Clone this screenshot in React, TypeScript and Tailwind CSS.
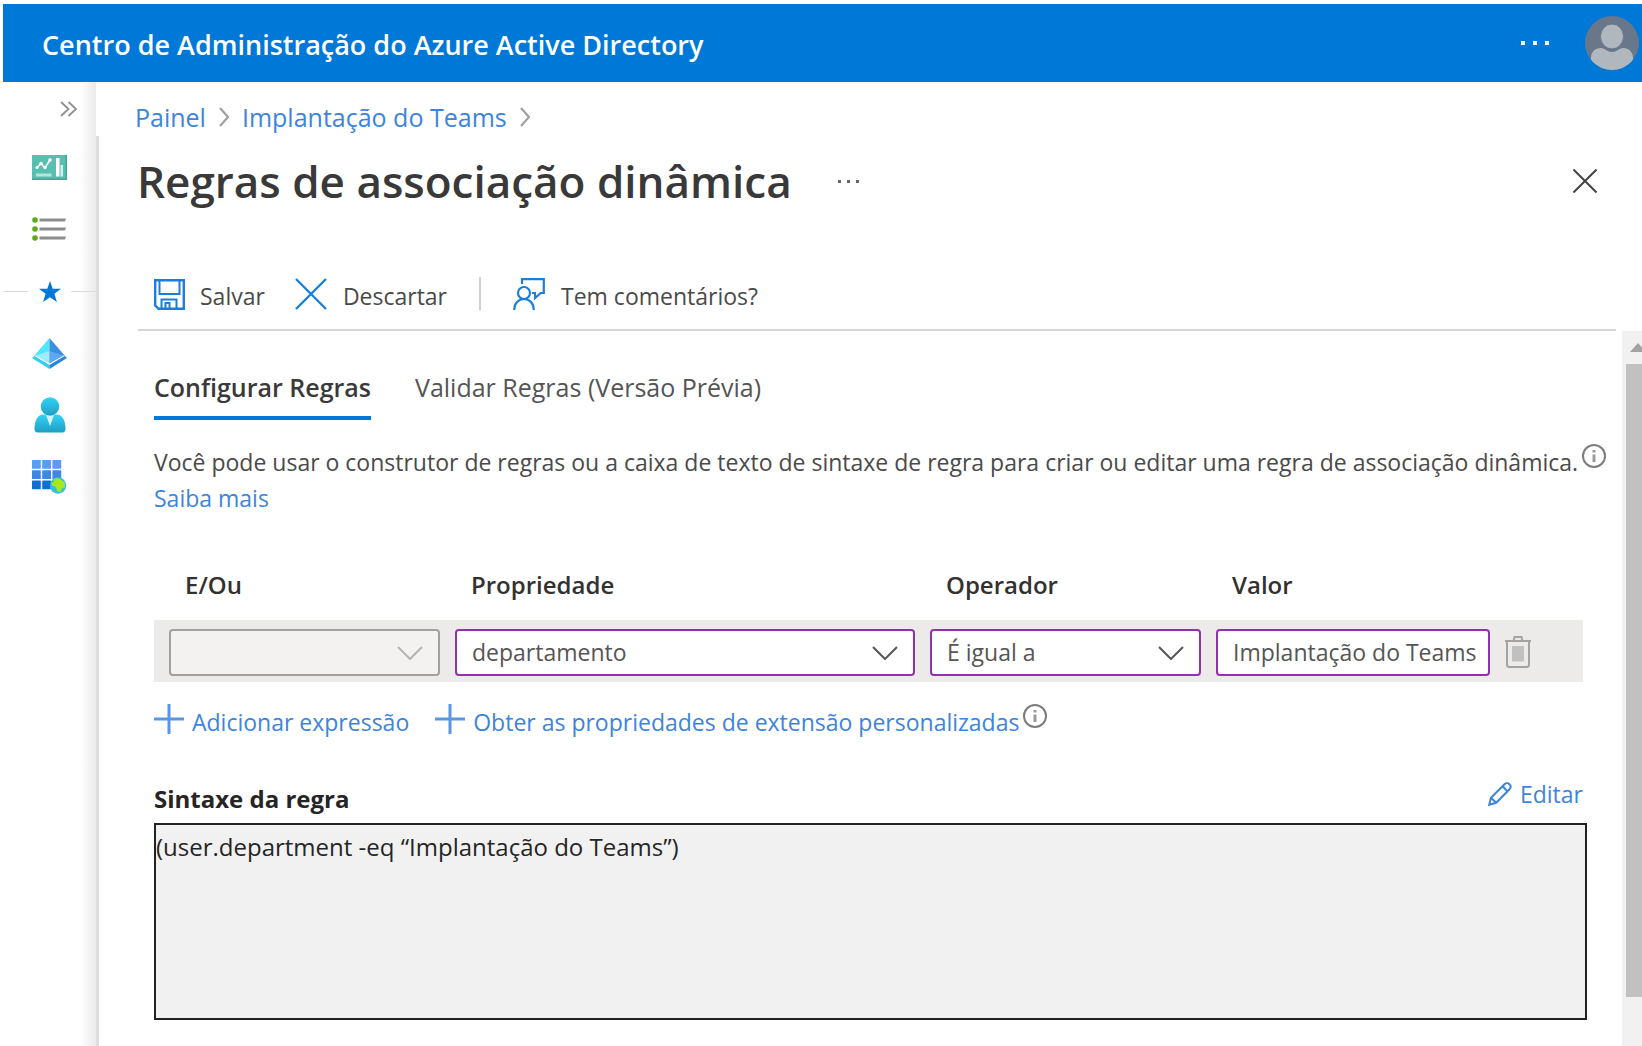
import { useState } from "react";
import type { ReactNode } from "react";

const tabs = ["Configurar Regras", "Validar Regras (Versão Prévia)"];

function Chevron({ className }: { className: string }) {
    return (
        <svg viewBox="0 0 26 14" className={`h-[14px] w-[26px] ${className}`} fill="none" stroke="currentColor" strokeWidth="2">
            <path d="M1 1l12 12L25 1" />
        </svg>
    );
}

function CrumbArrow() {
    return (
        <svg viewBox="0 0 10 20" className="h-5 w-[10px] text-[#a0a0a0]" fill="none" stroke="currentColor" strokeWidth="2.200">
            <path d="M1 1l8 9-8 9" />
        </svg>
    );
}

function PlusIcon() {
    return (
        <svg viewBox="0 0 30 30" className="size-[30px]" fill="none" stroke="#5b96e6" strokeWidth="3">
            <path d="M15 0v30M0 15h30" />
        </svg>
    );
}

function InfoIcon() {
    return (
        <svg viewBox="0 0 24 24" className="size-6 shrink-0" fill="none" stroke="#7c7c7c">
            <circle cx="12" cy="12" r="11" strokeWidth="2" />
            <path d="M12 10.500V18M12 6v2.500" strokeWidth="3" stroke="#9a9a9a" />
        </svg>
    );
}

function DashboardIcon() {
    return (
        <svg viewBox="0 0 35 25" className="h-[25px] w-[35px]">
            <rect width="35" height="25" fill="#56bfb0" />
            <path d="M0 25h35V0h-1.500v23.500H0z" fill="#45a597" />
            <path d="M4.500 13l4.500-4.500 4 4.500 5-8" fill="none" stroke="#fff" strokeWidth="1.600" />
            <circle cx="5" cy="12.500" r="1.500" fill="#fff" />
            <circle cx="9" cy="8.500" r="1.700" fill="#fff" />
            <circle cx="13" cy="12.500" r="1.700" fill="#fff" />
            <circle cx="18" cy="5" r="1.800" fill="#fff" />
            <path d="M4 18.500h15.500v3H4z" fill="#b5e3dc" />
            <path d="M24 3h3.500v18.500H24z" fill="#fff" />
            <path d="M28.500 10H31v11.500h-2.500z" fill="#d5f0ec" />
        </svg>
    );
}

function ListIcon() {
    return (
        <svg viewBox="0 0 35 24" className="h-6 w-[35px]">
            {[3, 12, 21].map((y) => (
                <g key={y}>
                    <circle cx="3" cy={y} r="2.800" fill="#5ea81c" />
                    <path d={`M7.500 ${y - 1.5}H34l-1 3H7.500z`} fill="#8c8c8c" />
                </g>
            ))}
        </svg>
    );
}

function PyramidIcon() {
    return (
        <svg viewBox="0 0 35 31" className="h-[31px] w-[35px]">
            <path d="M17.500 0L1.500 18.500l16 9z" fill="#50e6ff" />
            <path d="M17.500 0l16 18.500-16 9z" fill="#3a8fe0" />
            <path d="M2 18l15.500-5v14z" fill="#9cebff" />
            <path d="M33 18l-15.500-5v14z" fill="#5ea8ef" />
            <path d="M2.500 18l15 8.500 15-8.500" fill="none" stroke="#fff" strokeWidth="1.800" />
            <path d="M0 20l2.500-2 15 9v4z" fill="#32cfec" />
            <path d="M35 20l-2.500-2-15 9v4z" fill="#2c86dc" />
        </svg>
    );
}

function PersonIcon() {
    return (
        <svg viewBox="0 0 32 36" className="h-9 w-8">
            <defs>
                <linearGradient id="person" x1="0" y1="0" x2="0" y2="1">
                    <stop offset="0" stopColor="#32d4f5" />
                    <stop offset="1" stopColor="#1f9dc4" />
                </linearGradient>
            </defs>
            <path d="M.5 32C.5 23 4 17.500 9 17.500h14c5 0 8.500 5.500 8.500 14.500 0 2-1.200 3.500-3.200 3.500H3.700C1.700 35.500.5 34 .5 32z" fill="url(#person)" />
            <path d="M12 18h8l-4 11z" fill="#d6f5fc" />
            <circle cx="16" cy="9.500" r="9.300" fill="url(#person)" />
        </svg>
    );
}

function AppsIcon() {
    const rows = ["#5a9cf2", "#3f87e6", "#0f6fd6"];
    return (
        <svg viewBox="0 0 35 34" className="h-[34px] w-[35px]">
            {rows.map((fill, r) => [0, 1, 2].map((c) => <rect key={`${r}${c}`} x={c * 10.2} y={r * 10.2} width="8.800" height="8.800" rx="0.600" fill={fill} />))}
            <circle cx="26" cy="25.500" r="8.200" fill="#32bfe0" />
            <path d="M21 19.500l4-1.500 4 1.500 3.500 3 .5 5-3 1-1.500 3.500-3.500-1-1-4-4-1.500-.5-3 3-.5z" fill="#a6e81e" />
        </svg>
    );
}

function SaveIcon() {
    return (
        <svg viewBox="0 0 31 31" className="size-[31px]" fill="none" stroke="#1a7fdb" strokeWidth="2.400">
            <path d="M1.200 1.200h28.600v28.600H4.500l-3.300-3.300z" />
            <path d="M5.500 1v14h20V1M7.500 30v-9.500h15V30M11.500 30v-6h4v6" strokeWidth="2" />
        </svg>
    );
}

function FeedbackIcon() {
    return (
        <svg viewBox="0 0 32 32" className="size-8" fill="none" stroke="#1a7fdb" strokeWidth="2.200">
            <path d="M9 6V1.200h21.800V15h-3L22 20v-5h-3" />
            <circle cx="11" cy="15" r="6" />
            <path d="M1.200 32c0-6.500 4.300-11 9.800-11s9.800 4.500 9.800 11" />
        </svg>
    );
}

function TrashIcon() {
    return (
        <svg viewBox="0 0 26 32" className="h-8 w-[26px]" fill="none" stroke="#a3a3a3" strokeWidth="2">
            <path d="M0 5h26M8.500 5l1-4h7l1 4M2 5v23.500c0 1.500.8 2.500 2.300 2.500h17.400c1.500 0 2.300-1 2.300-2.500V5" />
            <path d="M7 10h12v15.500H7z" fill="#c0c0c0" stroke="none" />
        </svg>
    );
}

function PencilIcon() {
    return (
        <svg viewBox="0 0 24 24" className="size-6" fill="none" stroke="#3d84dc" strokeWidth="2">
            <path d="M1.200 22.800l1.800-7L16.500 2.300c1.500-1.500 3.500-1.500 5 0s1.300 3.500 0 5L8.200 20.800z" />
            <path d="M3 15.800l5.200 5M14.500 4.300l5.200 5.200" />
        </svg>
    );
}

function NavItem({ label, children }: { label: string; children: ReactNode }) {
    return (
        <a href="#" aria-label={label} className="flex h-[62px] w-[93px] items-center justify-center">
            {children}
        </a>
    );
}

function Sidebar() {
    return (
        <nav className="relative w-24 shrink-0">
            <div className="absolute inset-y-0 right-[3px] w-4 bg-linear-to-r from-white to-[#ebebeb]" />
            <div className="absolute top-[54px] right-0 bottom-0 w-[3px] bg-[#dedede]" />
            <div className="relative">
                <button aria-label="Expandir menu" className="flex h-[54px] w-full items-center pl-[57px]">
                    <svg viewBox="0 0 17 16" className="h-4 w-[17px]" fill="none" stroke="#8f8f8f" strokeWidth="1.800">
                        <path d="M1 1l7.500 7L1 15M8.500 1L16 8l-7.500 7" />
                    </svg>
                </button>
                <NavItem label="Painel"><DashboardIcon /></NavItem>
                <NavItem label="Todos os serviços"><ListIcon /></NavItem>
                <div className="flex h-[62px] w-[93px] items-center justify-between">
                    <span className="h-px w-[25px] bg-[#dcdcdc]" />
                    <svg viewBox="0 0 22 21" className="h-[21px] w-[22px]">
                        <path d="M11 0l2.700 7.800H22l-6.600 5 2.500 8.200L11 16.200 4.100 21l2.500-8.200L0 7.800h8.300z" fill="#0078d7" />
                    </svg>
                    <span className="h-px w-[25px] bg-[#dcdcdc]" />
                </div>
                <NavItem label="Azure Active Directory"><PyramidIcon /></NavItem>
                <NavItem label="Usuários"><PersonIcon /></NavItem>
                <NavItem label="Aplicativos empresariais"><AppsIcon /></NavItem>
            </div>
        </nav>
    );
}

function RuleBuilder() {
    const field = "h-[47px] w-full appearance-none rounded border-2 pl-[15px] text-[23px] outline-none";
    const columns = "grid grid-cols-[271fr_460fr_271fr_274fr_78fr] gap-x-[15px] pl-[15px]";
    return (
        <div className="mr-1">
            <div className={`${columns} text-2xl leading-8 font-semibold text-[#323130]`}>
                <label htmlFor="and-or" className="pl-4">E/Ou</label>
                <label htmlFor="property" className="pl-4">Propriedade</label>
                <label htmlFor="operator" className="pl-4">Operador</label>
                <label htmlFor="value" className="pl-4">Valor</label>
            </div>
            <div className={`${columns} mt-[19px] h-[62px] items-center bg-[#edebe9] pt-0.5`}>
                <div className="relative">
                    <select id="and-or" disabled className={`${field} border-[#a3a19f] bg-[#f3f2f1] opacity-100`}>
                        <option></option>
                    </select>
                    <Chevron className="pointer-events-none absolute top-[17px] right-[17px] text-[#b5b3b1]" />
                </div>
                <div className="relative">
                    <select id="property" className={`${field} border-[#8f33ab] bg-white text-[#555]`}>
                        <option>departamento</option>
                    </select>
                    <Chevron className="pointer-events-none absolute top-[17px] right-[17px] text-[#555]" />
                </div>
                <div className="relative">
                    <select id="operator" className={`${field} border-[#8f33ab] bg-white text-[#555]`}>
                        <option>É igual a</option>
                    </select>
                    <Chevron className="pointer-events-none absolute top-[17px] right-[17px] text-[#555]" />
                </div>
                <input id="value" defaultValue="Implantação do Teams" className={`${field} border-[#8f33ab] bg-white text-[#555]`} />
                <button aria-label="Excluir expressão" className="w-[26px]">
                    <TrashIcon />
                </button>
            </div>
        </div>
    );
}

export default function App() {
    const [activeTab, setActiveTab] = useState(tabs[0]);
    return (
        <div className="flex min-h-screen flex-col bg-white pt-1 pl-[3px] font-['Open_Sans','Noto_Sans',sans-serif] text-[#4a4a4a]">
            <header className="flex h-[78px] items-center bg-[#0078d7] pr-[3px] pl-[39px] text-white">
                <span className="flex-1 pt-1 text-[27px] font-semibold">Centro de Administração do Azure Active Directory</span>
                <button aria-label="Mais opções" className="mr-9">
                    <svg viewBox="0 0 28 4" className="h-1 w-7" fill="currentColor">
                        <path d="M0 0h4v4H0zM12 0h4v4h-4zM24 0h4v4h-4z" />
                    </svg>
                </button>
                <button aria-label="Conta">
                    <svg viewBox="0 0 54 54" className="size-[54px]">
                        <clipPath id="avatar"><circle cx="27" cy="27" r="27" /></clipPath>
                        <g clipPath="url(#avatar)">
                            <rect width="54" height="54" fill="#68778a" />
                            <path d="M6 54V42c0-6 4-10 10-10 4 0 6 4 11 4s7-4 11-4c6 0 10 4 10 10v12z" fill="#b1b7be" />
                            <ellipse cx="27" cy="20.500" rx="11.500" ry="12.500" fill="#b1b7be" stroke="#68778a" strokeWidth="1" />
                        </g>
                    </svg>
                </button>
            </header>

            <div className="flex flex-1">
                <Sidebar />
                <main className="flex min-w-0 flex-1 flex-col">
                    <nav aria-label="Trilha" className="mt-[19px] flex items-center gap-[13px] pl-9 text-[25px] leading-8 text-[#3d84dc]">
                        <a href="#">Painel</a>
                        <CrumbArrow />
                        <a href="#">Implantação do Teams</a>
                        <CrumbArrow />
                    </nav>

                    <div className="mt-4 flex items-center pr-[45px] pl-[38px]">
                        <h1 className="text-[44px] leading-[64px] font-semibold text-[#393939]">Regras de associação dinâmica</h1>
                        <button aria-label="Mais" className="ml-[46px]">
                            <svg viewBox="0 0 22 3" className="h-[3px] w-[22px]" fill="#666">
                                <path d="M0 0h3v3H0zM9 0h3v3H9zM18 0h3v3h-3z" />
                            </svg>
                        </button>
                        <button aria-label="Fechar" className="ml-auto">
                            <svg viewBox="0 0 24 24" className="size-6" fill="none" stroke="#444" strokeWidth="2">
                                <path d="M.5.5l23 23M23.500.5l-23 23" />
                            </svg>
                        </button>
                    </div>

                    <div className="mt-[60px] mr-[26px] ml-[39px] flex h-[58px] border-b-2 border-[#d6d6d6] pl-4 text-[23px]">
                        <button className="flex h-[42px] items-center gap-[15px]">
                            <SaveIcon />
                            <span className="pt-1">Salvar</span>
                        </button>
                        <button className="ml-[30px] flex h-[42px] items-center gap-4">
                            <svg viewBox="0 0 32 32" className="size-8" fill="none" stroke="#1a7fdb" strokeWidth="2.400">
                                <path d="M1 1l30 30M31 1L1 31" />
                            </svg>
                            <span className="pt-1">Descartar</span>
                        </button>
                        <span className="mx-8 mt-1 h-[33px] w-0.5 bg-[#d0d0d0]" />
                        <button className="flex h-[42px] items-center gap-4">
                            <FeedbackIcon />
                            <span className="pt-1">Tem comentários?</span>
                        </button>
                    </div>

                    <div className="flex flex-1">
                        <div className="min-w-0 flex-1 pr-[35px] pb-6 pl-[55px]">
                            <div role="tablist" className="mt-9 flex gap-11 text-[25px] leading-10">
                                {tabs.map((tab) => (
                                    <button
                                        key={tab}
                                        role="tab"
                                        aria-selected={tab === activeTab}
                                        onClick={() => setActiveTab(tab)}
                                        className={`border-b-4 pb-[9px] ${tab === activeTab ? "border-[#0078d7] font-semibold text-[#393939]" : "border-transparent text-[#555]"}`}
                                    >
                                        {tab}
                                    </button>
                                ))}
                            </div>

                            <div className="mt-6 -mr-6 flex items-start gap-1 text-[23px] leading-9">
                                <p>
                                    Você pode usar o construtor de regras ou a caixa de texto de sintaxe de regra para criar ou editar uma regra de associação dinâmica.
                                    <br />
                                    <a href="#" className="text-[#3d84dc]">Saiba mais</a>
                                </p>
                                <InfoIcon />
                            </div>

                            <div className="mt-[53px]">
                                <RuleBuilder />
                            </div>

                            <div className="mt-4 flex items-center text-[23px] leading-9 text-[#3d84dc]">
                                <button className="mr-[26px] flex items-center gap-2">
                                    <PlusIcon />
                                    <span className="pt-[6px]">Adicionar expressão</span>
                                </button>
                                <button className="flex items-center gap-2">
                                    <PlusIcon />
                                    <span className="pt-[6px]">Obter as propriedades de extensão personalizadas</span>
                                </button>
                                <span className="ml-1 self-start pt-[6px]">
                                    <InfoIcon />
                                </span>
                            </div>

                            <div className="mt-[34px] mb-1 flex items-start justify-between">
                                <label htmlFor="syntax" className="pt-[5px] text-2xl leading-10 font-bold text-[#252525]">Sintaxe da regra</label>
                                <button className="mr-1 flex items-center gap-2 text-[23px] leading-10 text-[#3d84dc]">
                                    <PencilIcon />
                                    Editar
                                </button>
                            </div>
                            <textarea
                                id="syntax"
                                readOnly
                                value="(user.department -eq “Implantação do Teams”)"
                                className="block h-[197px] w-full resize-none border-2 border-[#222] bg-[#f1f1f1] pt-1 text-2xl leading-9 text-[#252525] outline-none"
                            />
                        </div>

                        <div className="flex w-5 flex-col items-end overflow-hidden bg-[#f1f1f1]">
                            <svg viewBox="0 0 16 9" className="-mr-1 mt-3 mb-3 h-[9px] w-4 shrink-0">
                                <path d="M0 9l8-9 8 9z" fill="#a3a3a3" />
                            </svg>
                            <div className="mb-[49px] w-4 flex-1 bg-[#c1c1c1]" />
                        </div>
                    </div>
                </main>
            </div>
        </div>
    );
}
